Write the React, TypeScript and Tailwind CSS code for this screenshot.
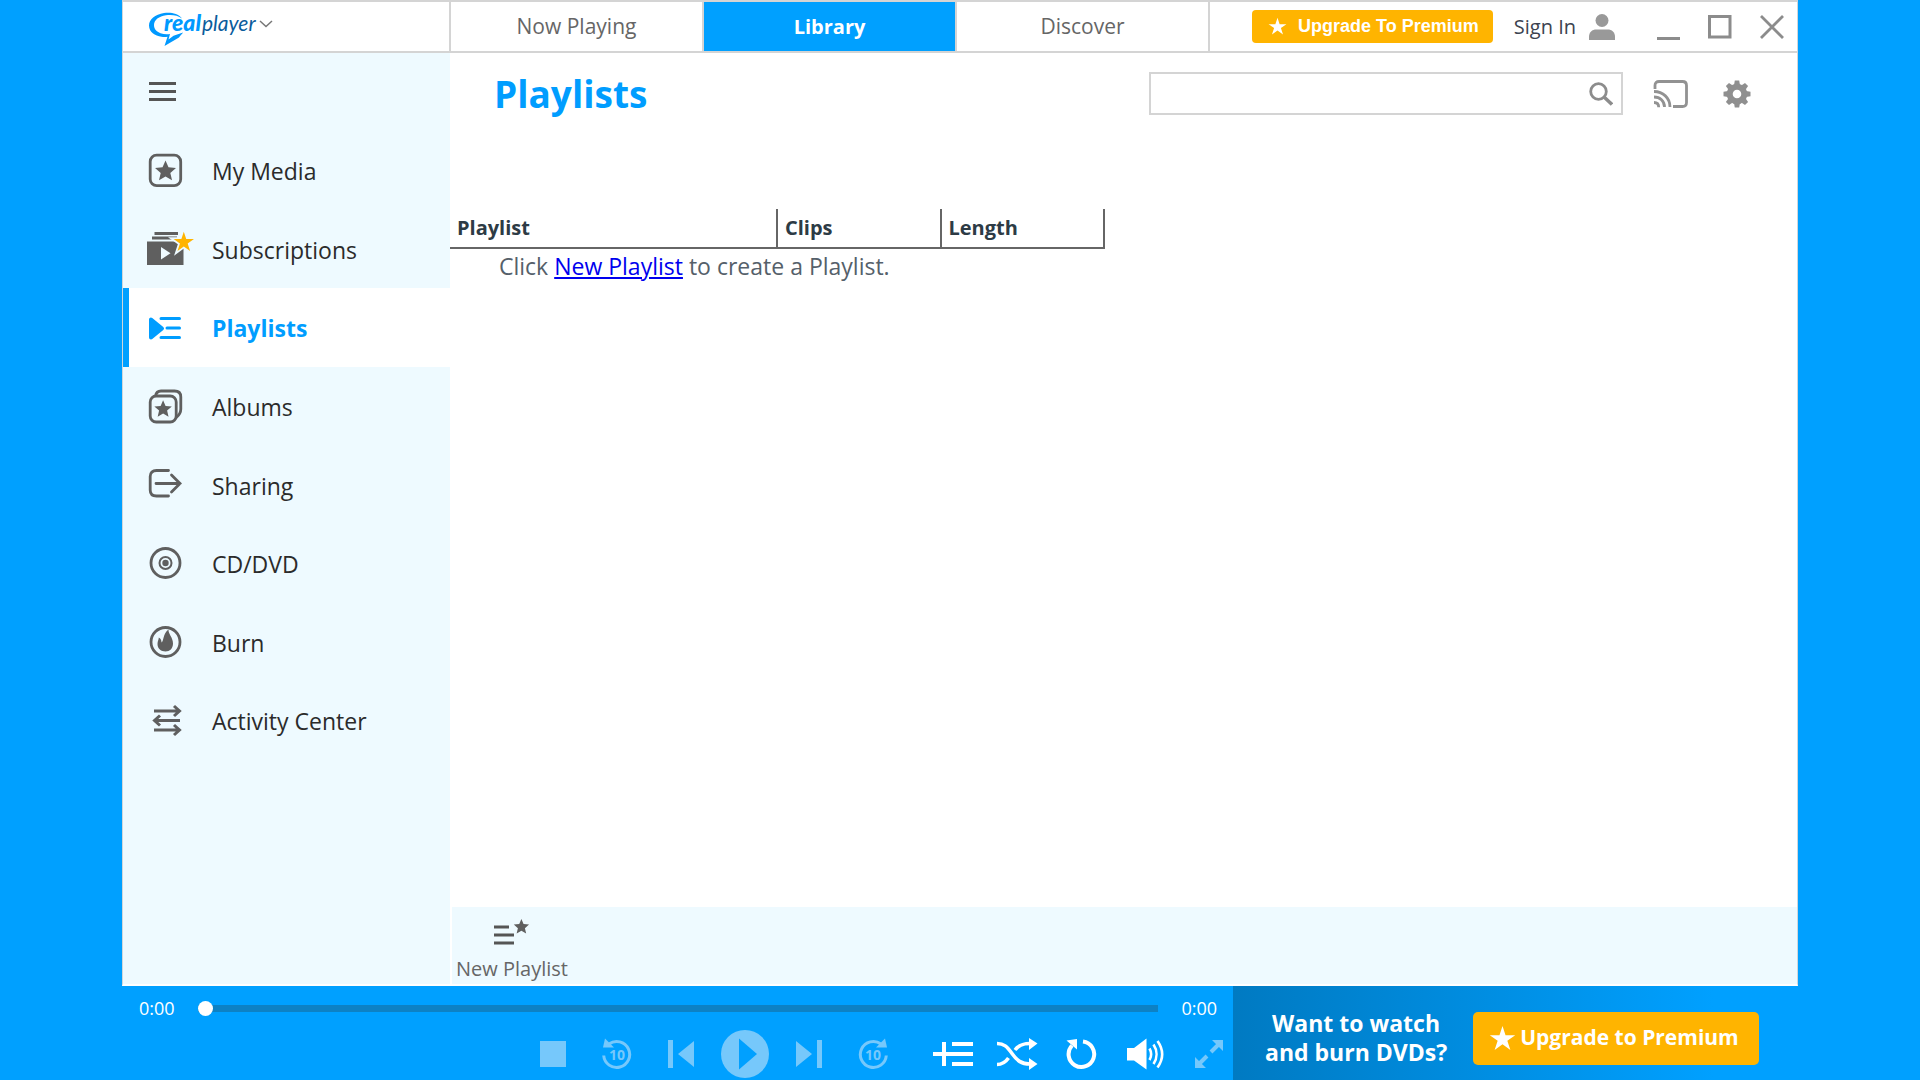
import type { ReactNode } from "react";

const STAR =
  "M12 1.5l3.1 7.2 7.8.7-5.9 5.1 1.8 7.7L12 18.1l-6.8 4.1L7 14.5 1.1 9.4l7.8-.7z";
const SHARP_STAR =
  "M12 .8l2.700 8.200H23.300l-7 5 2.700 8.200-7-5.100-7 5.100 2.700-8.200-7-5H9.300z";

function Star({ className }: { className: string }) {
  return (
    <svg viewBox="0 0 24 24" className={className} fill="currentColor" aria-hidden="true">
      <path d={SHARP_STAR} />
    </svg>
  );
}

function Logo() {
  return (
    <svg width="110" height="36" viewBox="0 0 110 36" className="overflow-visible" aria-label="RealPlayer">
      <path
        d="M33 6.500C29 1 21 0 15 1 6 2.500 0 7.500 0 13.500c0 6.500 6 10.500 12.500 11.300 2 .3 4 .3 6 0L15.500 34l14.500-8.600C31.500 23.500 33 22 34 20.500l-9.500 3.200-5 3.800 1.500-5.500c-3 .6-6.500.4-9.500-.8C7.500 19.500 5 17 5 13c0-5 5-8.700 12-9.700 6-.8 12 .2 16 3.200z"
        fill="#0099ff"
      />
      <text x="15" y="19" fontFamily="Lato, sans-serif" fontSize="23" fontStyle="italic" fontWeight="900" fill="#0099ff">
        real
      </text>
      <text x="53" y="19" fontFamily="Lato, sans-serif" fontSize="21" fontStyle="italic" fill="#0a5c9c">
        player
      </text>
    </svg>
  );
}

function SideIcon({ children }: { children: ReactNode }) {
  return (
    <svg width="48" height="36" viewBox="0 0 48 36" fill="none" stroke="currentColor" strokeWidth="2.800" aria-hidden="true">
      {children}
    </svg>
  );
}

const icons: Record<string, ReactNode> = {
  media: (
    <SideIcon>
      <rect x="3.200" y="3.200" width="30.500" height="30.500" rx="6.500" />
      <path d={STAR} transform="translate(7 7) scale(.96)" fill="currentColor" stroke="none" />
    </SideIcon>
  ),
  subs: (
    <SideIcon>
      <path d="M7.500 2.500H31M5 7h25" />
      <path d="M0 10.500h36.500V34H0z" fill="currentColor" stroke="none" />
      <path d="M14 16v12.500l9.500-6.200z" fill="#eefaff" stroke="none" />
      <path d={SHARP_STAR} transform="translate(26 0) scale(.9)" fill="#ffb400" stroke="#eefaff" strokeWidth="4" paintOrder="stroke" />
    </SideIcon>
  ),
  playlists: (
    <SideIcon>
      <path d="M4 9.500v18l11-9z" fill="currentColor" strokeLinejoin="round" strokeWidth="4" />
      <path d="M14 8.500h18.500M20 18h12.500M14 27.500h18.500" strokeWidth="3" strokeLinecap="round" />
    </SideIcon>
  ),
  albums: (
    <SideIcon>
      <rect x="3.200" y="8" width="26" height="26" rx="6" />
      <path d="M8.500 8C9 5 11 3 14 3h13.500c4 0 6.300 2.300 6.300 6v12c0 4-1.500 6-4.500 8.500" />
      <path d={STAR} transform="translate(6.500 11) scale(.8)" fill="currentColor" stroke="none" />
    </SideIcon>
  ),
  sharing: (
    <SideIcon>
      <path d="M21.500 3.500H9.500c-4 0-6.300 2-6.300 6v13.500c0 4 2.300 6 6.300 6h12" strokeLinecap="round" />
      <path d="M9 16.500h24M24.500 8l8.500 8.500-8.500 8.500" strokeLinecap="round" />
    </SideIcon>
  ),
  disc: (
    <SideIcon>
      <circle cx="18.500" cy="18" r="14.500" />
      <circle cx="18.500" cy="18" r="6" strokeWidth="2" />
      <circle cx="18.500" cy="18" r="3.200" fill="currentColor" stroke="none" />
    </SideIcon>
  ),
  burn: (
    <SideIcon>
      <circle cx="18.500" cy="18" r="14.500" />
      <path
        d="M21.500 5.500c-.3 4.500 4.500 8 4.500 14 0 5-3.200 8-7.500 8s-8-2.700-8-7.500c0-3 1.300-4.300 1.300-6.500 2.200 1.200 2.700 3 2.700 5 2.500-1.500 1-8.500 7-13z"
        fill="currentColor"
        stroke="none"
      />
    </SideIcon>
  ),
  activity: (
    <SideIcon>
      <path d="M7 8h25.500M27 3l5.500 5-5.500 5M33 17.500H8M13 12.500l-5.500 5 5.500 5M7 27h25.500M27 22l5.500 5-5.500 5" strokeWidth="3" />
    </SideIcon>
  ),
};

const items = [
  { label: "My Media", icon: "media" },
  { label: "Subscriptions", icon: "subs" },
  { label: "Playlists", icon: "playlists", active: true },
  { label: "Albums", icon: "albums" },
  { label: "Sharing", icon: "sharing" },
  { label: "CD/DVD", icon: "disc" },
  { label: "Burn", icon: "burn" },
  { label: "Activity Center", icon: "activity" },
];

function Header() {
  return (
    <header className="flex h-[51px] items-stretch border-b-2 border-[#d4d4d4] bg-white">
      <button className="flex w-[326px] items-center gap-1 pt-[7px] pl-[26px]" aria-label="RealPlayer menu">
        <Logo />
        <svg width="14" height="8" viewBox="0 0 14 8" className="mb-3 -ml-1" fill="none" stroke="#777" strokeWidth="1.500">
          <path d="M1 1l6 5.500L13 1" />
        </svg>
      </button>
      <nav className="flex text-[21px] text-[#666]">
        <button className="w-[253px] border-l-2 border-[#d4d4d4]">Now Playing</button>
        <button className="w-[253px] border-l-2 border-[#d4d4d4] bg-[#00a0ff] text-[20px] font-bold text-white">Library</button>
        <button className="w-[255px] border-x-2 border-[#d4d4d4]">Discover</button>
      </nav>
      <div className="flex flex-1 items-center justify-end">
        <button className="flex h-[33px] items-center gap-[11px] rounded bg-[#ffb400] pr-[14px] pl-4 font-['Liberation_Sans',sans-serif] text-[18px] font-bold text-white">
          <Star className="size-[19px]" />
          Upgrade To Premium
        </button>
        <button className="ml-[21px] flex items-center gap-3 text-[20px] text-[#3c4350]">
          Sign In
          <svg width="28" height="28" viewBox="0 0 28 28" fill="#999" aria-hidden="true">
            <circle cx="14" cy="7.500" r="6.500" />
            <path d="M1 27v-3c0-5 3-7.500 7.500-7.500h11c4.500 0 7.500 2.500 7.500 7.500v3z" />
          </svg>
        </button>
        <div className="ml-10 flex items-center gap-7 pr-[13px] text-[#8c8c8c]">
          <button aria-label="Minimize">
            <svg width="24" height="26" viewBox="0 0 24 26" stroke="currentColor" strokeWidth="3">
              <path d="M1 24.500h23" />
            </svg>
          </button>
          <button aria-label="Maximize">
            <svg width="24" height="26" viewBox="0 0 24 26" fill="none" stroke="currentColor" strokeWidth="3">
              <rect x="1.500" y="2.500" width="20.500" height="20.500" />
            </svg>
          </button>
          <button aria-label="Close">
            <svg width="24" height="26" viewBox="0 0 24 26" stroke="currentColor" strokeWidth="2.800">
              <path d="M1 2l22 22M23 2L1 24" />
            </svg>
          </button>
        </div>
      </div>
    </header>
  );
}

function Sidebar() {
  return (
    <nav className="w-[327px] bg-[#eefaff]">
      <button className="mt-[26px] mb-7 ml-[26px] flex h-6 w-[27px] flex-col justify-center gap-[5px]" aria-label="Menu">
        <span className="h-[3px] w-full bg-[#555]" />
        <span className="h-[3px] w-full bg-[#555]" />
        <span className="h-[3px] w-full bg-[#555]" />
      </button>
      <ul className="grid h-[629px] auto-rows-fr">
        {items.map((it) => (
          <li key={it.label} className="flex">
            <a
              href="#"
              className={
                it.active
                  ? "flex flex-1 items-center border-l-6 border-[#00a0ff] bg-white pl-[18px] text-[23px] font-bold text-[#009dff]"
                  : "flex flex-1 items-center border-l-6 border-transparent pl-[18px] text-[23px] text-[#2b2b2b]"
              }
            >
              <span className={it.active ? "text-[#009dff]" : "text-[#5f5f5f]"}>{icons[it.icon]}</span>
              <span className="ml-[17px] pt-[2px]">{it.label}</span>
            </a>
          </li>
        ))}
      </ul>
    </nav>
  );
}

function Content() {
  return (
    <main className="flex flex-1 flex-col bg-white">
      <div className="flex items-center justify-between pt-[19px] pr-[46px] pl-11">
        <h1 className="text-[37px] leading-[43px] font-bold text-[#009dff]">Playlists</h1>
        <div className="flex items-center">
          <div className="flex h-[43px] w-[474px] items-center border-2 border-[#d4d4d4] pr-2">
            <input type="search" aria-label="Search library" className="h-full min-w-0 flex-1 px-2 text-[20px] outline-none" />
            <svg width="24" height="24" viewBox="0 0 24 24" fill="none" stroke="#8c8c8c" strokeWidth="2.800" aria-hidden="true">
              <circle cx="9.500" cy="9.500" r="7.800" />
              <path d="M15 15l8 7.500" strokeWidth="3.500" />
            </svg>
          </div>
          <button className="ml-[30px]" aria-label="Cast">
            <svg width="35" height="28" viewBox="0 0 35 28" fill="none" stroke="#929292" strokeWidth="2.800">
              <path d="M2 9V5.500C2 3 3.500 1.500 6 1.500h23.500c2.500 0 4 1.500 4 4v17c0 2.500-1.500 4-4 4H20" />
              <path d="M1 11.500c9 0 16 6.500 16 15.500M1 17c6 0 10.500 4 10.500 10M1 22.500c3 0 4.700 1.700 4.700 4.700" />
            </svg>
          </button>
          <button className="ml-[35px]" aria-label="Settings">
            <svg width="28" height="28" viewBox="-14 -14 28 28" fill="#8f8f8f">
              <path
                fillRule="evenodd"
                d="M0-10.300A10.300 10.300 0 1 1 0 10.300 10.300 10.300 0 1 1 0-10.300zM0-4.300A4.300 4.300 0 1 0 0 4.300 4.300 4.300 0 1 0 0-4.300z"
              />
              {[0, 45, 90, 135, 180, 225, 270, 315].map((a) => (
                <path key={a} d="M-3-9l.8-4.500h4.400L3-9z" transform={`rotate(${a})`} />
              ))}
            </svg>
          </button>
        </div>
      </div>

      <table className="mt-[94px] w-[655px] table-fixed text-left text-[20px] text-[#2d3b45]">
        <thead>
          <tr className="h-[39px] border-b-2 border-[#666]">
            <th className="w-[327px] border-r-2 border-[#666] pl-[7px]">Playlist</th>
            <th className="border-r-2 border-[#666] pl-[7px]">Clips</th>
            <th className="border-r-2 border-[#666] pl-[7px]">Length</th>
          </tr>
        </thead>
        <tbody>
          <tr>
            <td colSpan={3} className="pl-[49px] text-[23px] leading-[34px] text-[#55606a]">
              Click{" "}
              <a href="#" className="text-[#0000ee] underline decoration-2 underline-offset-2">
                New Playlist
              </a>{" "}
              to create a Playlist.
            </td>
          </tr>
        </tbody>
      </table>

      <div className="mt-auto ml-[2px] flex h-[77px] items-start bg-[#eefaff]">
        <button className="flex flex-col items-center px-1 pt-[11px] text-[20px] text-[#666]">
          <svg width="38" height="28" viewBox="0 0 38 28" aria-hidden="true">
            <path d="M1 9h15M1 17h20M1 25h20" stroke="#555" strokeWidth="3" />
            <path d={STAR} transform="translate(20 0) scale(.7)" fill="#5f5f5f" />
          </svg>
          <span className="mt-2 leading-[30px]">New Playlist</span>
        </button>
      </div>
    </main>
  );
}

function Ctl({ label, children, dim }: { label: string; children: ReactNode; dim?: boolean }) {
  return (
    <button
      aria-label={label}
      className={dim ? "flex w-10 shrink-0 items-center justify-center text-[#76c8fb]" : "flex w-10 shrink-0 items-center justify-center text-white"}
    >
      {children}
    </button>
  );
}

function Skip10({ forward }: { forward?: boolean }) {
  return (
    <svg width="32" height="32" viewBox="0 0 32 32" fill="none" stroke="currentColor" strokeWidth="3">
      <g transform={forward ? "translate(32 0) scale(-1 1)" : undefined}>
        <path d="M8 6A13 13 0 1 1 2.700 17.500" />
        <path d="M4 .5L13 9.500H2z" fill="currentColor" stroke="none" />
      </g>
      <text x="16" y="21.500" textAnchor="middle" fontFamily="Open Sans, sans-serif" fontSize="14" fontWeight="700" fill="currentColor" stroke="none">
        10
      </text>
    </svg>
  );
}

function Player() {
  return (
    <section className="min-w-0 flex-1 pt-[10px]" aria-label="Player">
      <div className="flex h-6 items-center pr-4 pl-[17px] text-[18px] text-white">
        <span>0:00</span>
        <input
          type="range"
          min="0"
          max="100"
          defaultValue="0"
          aria-label="Seek"
          className="mx-[23px] h-[7px] flex-1 appearance-none bg-[#0d81c4] [&::-webkit-slider-thumb]:size-[15px] [&::-webkit-slider-thumb]:appearance-none [&::-webkit-slider-thumb]:rounded-full [&::-webkit-slider-thumb]:bg-white"
        />
        <span>0:00</span>
      </div>
      <div className="mt-[10px] flex h-12 items-center justify-end gap-6 pr-1">
        <Ctl label="Stop" dim>
          <span className="size-[26px] bg-current" />
        </Ctl>
        <Ctl label="Back 10 seconds" dim>
          <Skip10 />
        </Ctl>
        <Ctl label="Previous" dim>
          <svg width="28" height="28" viewBox="0 0 28 28" fill="currentColor">
            <path d="M1 0h5v28H1zM27 1v26L11 14z" />
          </svg>
        </Ctl>
        <Ctl label="Play" dim>
          <svg width="48" height="48" viewBox="0 0 48 48" className="shrink-0">
            <circle cx="24" cy="24" r="24" fill="currentColor" />
            <path d="M18 8.500v31L36 24z" fill="#00a0ff" />
          </svg>
        </Ctl>
        <Ctl label="Next" dim>
          <svg width="28" height="28" viewBox="0 0 28 28" fill="currentColor">
            <path d="M22 0h5v28h-5zM1 1v26l16-13z" />
          </svg>
        </Ctl>
        <Ctl label="Forward 10 seconds" dim>
          <Skip10 forward />
        </Ctl>
        <div className="ml-4 flex items-center gap-6">
          <Ctl label="Add to queue">
            <svg width="40" height="28" viewBox="0 0 40 28" stroke="currentColor" strokeWidth="4">
              <path d="M0 14h40M11 2v24M19 4h21M19 24h21" />
            </svg>
          </Ctl>
          <Ctl label="Shuffle">
            <svg width="42" height="32" viewBox="0 0 42 32" fill="none" stroke="currentColor" strokeWidth="3.600" className="shrink-0">
              <path d="M1 5.500c7 0 10 3 15 10s9 10.500 18 10.500M1 26.500c6 0 9-3 11.500-6.500M19 12c3.500-4.500 7-6.500 15-6.500" />
              <path d="M33 0l8.500 5.500L33 12zM33 20l8.500 6L33 32z" fill="currentColor" stroke="none" />
            </svg>
          </Ctl>
          <Ctl label="Repeat">
            <svg width="32" height="32" viewBox="0 0 32 32" fill="none" stroke="currentColor" strokeWidth="4">
              <path d="M18 3.500A12.800 12.800 0 1 1 7 7.500" />
              <path d="M1.500 2.500L12 1v10.500z" fill="currentColor" stroke="none" />
            </svg>
          </Ctl>
          <Ctl label="Volume">
            <svg width="38" height="32" viewBox="0 0 38 32" fill="none" stroke="currentColor" strokeWidth="2.600" className="shrink-0">
              <path d="M1 10h7L20.500.500v31L8 22.500H1z" fill="currentColor" stroke="none" />
              <path d="M23.500 10.500c2 3.500 2 8 0 11.500M27.500 6.500c4 6 4 13.500 0 19.500M31.500 3c6 8.500 6 18 0 26.500" />
            </svg>
          </Ctl>
          <Ctl label="Full screen" dim>
            <svg width="30" height="30" viewBox="0 0 30 30" fill="currentColor" stroke="currentColor" strokeWidth="4">
              <path d="M25 5l-8 8M13 17l-8 8" />
              <path d="M18 1h11v11zM1 18v11h11z" stroke="none" />
            </svg>
          </Ctl>
        </div>
      </div>
    </section>
  );
}

export default function App() {
  return (
    <div className="flex min-h-screen flex-col bg-[#00a0ff] px-[122px] font-['Open_Sans','Noto_Sans',sans-serif]">
      <div className="flex flex-1 flex-col border-x border-t-2 border-b-2 border-x-[#cfd6da] border-t-[#d4d4d4] border-b-white">
        <Header />
        <div className="flex flex-1 items-stretch">
          <Sidebar />
          <Content />
        </div>
      </div>
      <footer className="flex h-[94px]">
        <Player />
        <aside className="flex w-[565px] items-center bg-linear-to-r from-[#007ac2] to-[#00a0ff] to-85% pt-[10px] pl-8">
          <p className="text-center text-[23px] leading-[29px] font-bold text-white">
            Want to watch
            <br />
            and burn DVDs?
          </p>
          <button className="ml-[26px] flex h-[53px] items-center gap-1 rounded-[5px] bg-[#ffb400] pr-[20px] pl-4 text-[21px] font-bold text-white">
            <Star className="size-[27px]" />
            Upgrade to Premium
          </button>
        </aside>
      </footer>
    </div>
  );
}
